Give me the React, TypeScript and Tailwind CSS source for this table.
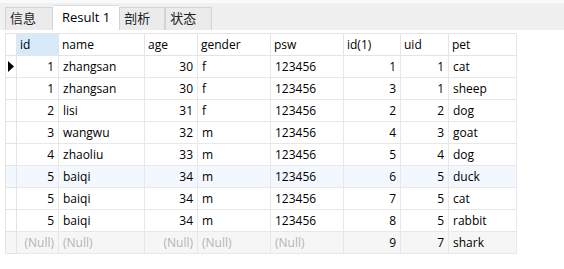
import React from "react";

const COLS = [
  { key: "id", label: "id", w: "w-[42px]", num: true },
  { key: "name", label: "name", w: "w-[86px]" },
  { key: "age", label: "age", w: "w-[53px]", num: true },
  { key: "gender", label: "gender", w: "w-[73px]" },
  { key: "psw", label: "psw", w: "w-[73px]" },
  { key: "id1", label: "id(1)", w: "w-[57px]", num: true },
  { key: "uid", label: "uid", w: "w-[48px]", num: true },
  { key: "pet", label: "pet", w: "w-[68px]" },
];

type Row = (string | null)[];

const ROWS: Row[] = [
  ["1", "zhangsan", "30", "f", "123456", "1", "1", "cat"],
  ["1", "zhangsan", "30", "f", "123456", "3", "1", "sheep"],
  ["2", "lisi", "31", "f", "123456", "2", "2", "dog"],
  ["3", "wangwu", "32", "m", "123456", "4", "3", "goat"],
  ["4", "zhaoliu", "33", "m", "123456", "5", "4", "dog"],
  ["5", "baiqi", "34", "m", "123456", "6", "5", "duck"],
  ["5", "baiqi", "34", "m", "123456", "7", "5", "cat"],
  ["5", "baiqi", "34", "m", "123456", "8", "5", "rabbit"],
  [null, null, null, null, null, "9", "7", "shark"],
];

const TABS = ["信息", "Result 1", "剖析", "状态"];

export default function App() {
  return (
    <div
      className="w-[564px] h-[269px] bg-white text-[12px] text-black overflow-hidden"
      style={{ fontFamily: '"Open Sans", "Noto Sans CJK SC", sans-serif' }}
    >
      {/* Tabs */}
      <div className="h-[30px] bg-[#f0f0f0] border-t-[3px] border-[#fafafa] flex items-end pl-[5px]">
        {TABS.map((t, i) =>
          i === 1 ? (
            <div
              key={t}
              className="h-[25px] px-[9px] bg-white flex items-center text-[13px] border-t border-[#e0e0e0]"
            >
              {t}
            </div>
          ) : (
            <div
              key={t}
              className={`h-[23px] ${i === 0 ? "w-[48px]" : i === 2 ? "w-[46px]" : "w-[47px]"} bg-[#ebebeb] border border-[#d4d4d4] border-b-0 flex items-center px-[4px] text-[13px] text-[#222]`}
            >
              {t}
            </div>
          )
        )}
      </div>

      {/* Grid */}
      <div className="pt-[3px] pl-[5px]">
        <div className="inline-block border-l border-t border-[#e4e4e4]">
          {/* header */}
          <div className="flex h-[22px]">
            <div className="w-[11px] border-r border-b border-[#e4e4e4]" />
            {COLS.map((c, i) => (
              <div
                key={c.key}
                className={`${c.w} ${i === 0 ? "bg-[#d7eafa]" : ""} border-r border-b border-[#e4e4e4] px-[3px] flex items-center`}
              >
                {c.label}
              </div>
            ))}
          </div>
          {ROWS.map((r, ri) => (
            <div
              key={ri}
              className={`flex h-[22px] ${ri === 5 ? "bg-[#f2f8fd]" : ri === 8 ? "bg-[#f6f6f6]" : ""}`}
            >
              <div className="w-[11px] border-r border-b border-[#e4e4e4] flex items-center justify-center">
                {ri === 0 && (
                  <svg width="6" height="11" viewBox="0 0 6 11">
                    <path d="M0 0 L6 5.5 L0 11 Z" fill="#000" />
                  </svg>
                )}
              </div>
              {COLS.map((c, ci) => {
                const v = r[ci];
                return (
                  <div
                    key={c.key}
                    className={`${c.w} border-r border-b border-[#e8e8e8] px-[4px] flex items-center ${c.num ? "justify-end" : ""} ${v === null ? "text-[#b4b4b4]" : ""}`}
                  >
                    {v === null ? "(Null)" : v}
                  </div>
                );
              })}
            </div>
          ))}
        </div>
      </div>
    </div>
  );
}
